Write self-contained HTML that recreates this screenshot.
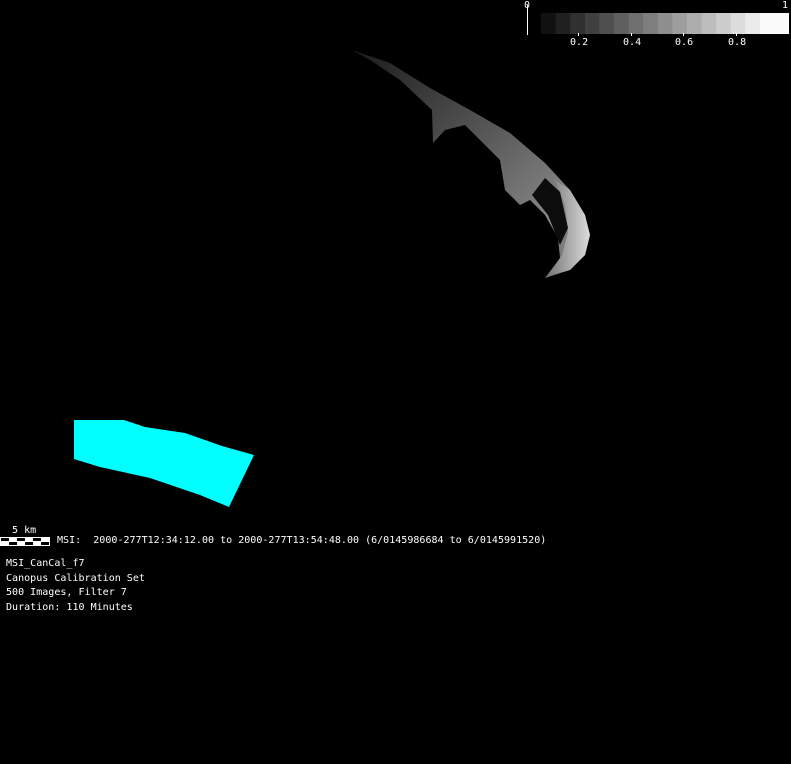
<!DOCTYPE html><html><head><style>
body{margin:0;background:#000;width:791px;height:764px;overflow:hidden;position:relative;font-family:"DejaVu Sans Mono","Liberation Mono",monospace;color:#fff;font-size:10px;letter-spacing:0.02px}
.t{position:absolute;white-space:pre;line-height:14.5px}
</style></head><body>
<svg width="791" height="764" style="position:absolute;left:0;top:0">
<defs>
<linearGradient id="g" x1="0" y1="0" x2="1" y2="1">
<stop offset="0" stop-color="#1a1a1a"/><stop offset="0.45" stop-color="#555"/><stop offset="0.8" stop-color="#888"/><stop offset="1" stop-color="#666"/>
</linearGradient>
<linearGradient id="rim" x1="0" y1="0" x2="1" y2="0"><stop offset="0" stop-color="#777"/><stop offset="1" stop-color="#ddd"/></linearGradient>
</defs>
<path d="M352,50 L390,63 L430,88 L470,110 L510,133 L545,163 L570,190 L585,215 L590,235 L585,255 L570,270 L545,278 L560,258 L558,238 L545,215 L530,200 L520,205 L505,190 L500,160 L480,140 L465,125 L445,130 L433,143 L432,110 L400,80 L370,60 Z" fill="url(#g)"/>
<path d="M555,180 L570,190 L585,215 L590,235 L585,255 L570,270 L548,276 L562,255 L568,232 L565,205 Z" fill="url(#rim)"/>
<path d="M532,195 L545,178 L560,192 L568,228 L560,245 L548,215 Z" fill="#0c0c0c"/>
<polygon points="74,420 124,420 145,427 185,433 222,446 254,455 229,507 200,495 150,478 100,467 74,459" fill="#0ff"/>
<line x1="527.5" y1="5" x2="527.5" y2="35" stroke="#fff"/>
<g>
<rect x="541" y="13" width="15" height="21" fill="#111"/>
<rect x="555.6" y="13" width="15" height="21" fill="#202020"/>
<rect x="570.2" y="13" width="15" height="21" fill="#303030"/>
<rect x="584.8" y="13" width="15" height="21" fill="#404040"/>
<rect x="599.4" y="13" width="15" height="21" fill="#4f4f4f"/>
<rect x="614" y="13" width="15" height="21" fill="#5f5f5f"/>
<rect x="628.6" y="13" width="15" height="21" fill="#6f6f6f"/>
<rect x="643.2" y="13" width="15" height="21" fill="#7e7e7e"/>
<rect x="657.8" y="13" width="15" height="21" fill="#8e8e8e"/>
<rect x="672.4" y="13" width="15" height="21" fill="#9e9e9e"/>
<rect x="687" y="13" width="15" height="21" fill="#adadad"/>
<rect x="701.6" y="13" width="15" height="21" fill="#bdbdbd"/>
<rect x="716.2" y="13" width="15" height="21" fill="#cccccc"/>
<rect x="730.8" y="13" width="15" height="21" fill="#dcdcdc"/>
<rect x="745.4" y="13" width="15" height="21" fill="#ebebeb"/>
<rect x="760" y="13" width="29" height="21" fill="#fbfbfb"/>
</g>
<g stroke="#fff"><line x1="578.5" y1="33" x2="578.5" y2="36"/><line x1="631.5" y1="33" x2="631.5" y2="36"/><line x1="683.5" y1="33" x2="683.5" y2="36"/><line x1="736.5" y1="33" x2="736.5" y2="36"/></g>
<rect x="0" y="537" width="50" height="9" fill="#fff"/>
<g fill="#000"><rect x="1" y="538" width="8" height="3"/><rect x="17" y="538" width="8" height="3"/><rect x="33" y="538" width="8" height="3"/><rect x="9" y="542" width="8" height="3"/><rect x="25" y="542" width="8" height="3"/><rect x="41" y="542" width="8" height="3"/></g>
</svg>
<div class="t" style="left:524px;top:-1px">0</div>
<div class="t" style="left:782px;top:-1px">1</div>
<div class="t" style="left:570px;top:36px">0.2</div>
<div class="t" style="left:623px;top:36px">0.4</div>
<div class="t" style="left:675px;top:36px">0.6</div>
<div class="t" style="left:728px;top:36px">0.8</div>
<div class="t" style="left:12px;top:524px">5 km</div>
<div class="t" style="left:57px;top:534px">MSI:  2000-277T12:34:12.00 to 2000-277T13:54:48.00 (6/0145986684 to 6/0145991520)</div>
<div class="t" style="left:6px;top:557px">MSI_CanCal_f7
Canopus Calibration Set
500 Images, Filter 7
Duration: 110 Minutes</div>
</body></html>
